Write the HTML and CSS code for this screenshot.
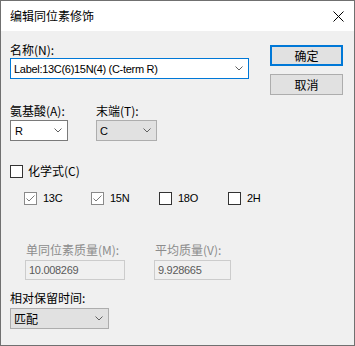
FILE: index.html
```html
<!DOCTYPE html>
<html lang="zh-CN">
<head>
    <meta charset="UTF-8">
    <meta name="viewport" content="width=device-width, initial-scale=1.0">
    <title>编辑同位素修饰</title>
    <link rel="stylesheet" href="styles.css">
</head>
<body>
<div class="dialog">
    <!-- Title Bar -->
    <div class="titlebar">
        <span class="title">编辑同位素修饰</span>
        <svg class="close" width="11" height="11" viewBox="0 0 11 11">
            <path d="M0.5 0.5 L10.5 10.5 M10.5 0.5 L0.5 10.5" stroke="#000" stroke-width="1" fill="none"/>
        </svg>
    </div>

    <div class="content">
        <!-- Name + Buttons -->
        <div class="top">
            <div class="name-field">
                <div class="lbl">名称(N):</div>
                <div class="combo combo-focus">
                    <span class="lat">Label:13C(6)15N(4) (C-term R)</span>
                    <svg class="arrow" width="8" height="5" viewBox="0 0 8 5"><path d="M0.5 0.5 L4 4 L7.5 0.5" stroke="#606060" fill="none"/></svg>
                </div>
            </div>
            <div class="buttons">
                <button class="btn btn-default">确定</button>
                <button class="btn">取消</button>
            </div>
        </div>

        <!-- Residue / Terminus -->
        <div class="residue">
            <div class="field field-aa">
                <div class="lbl">氨基酸(A):</div>
                <div class="combo combo-white">
                    <span class="lat">R</span>
                    <svg class="arrow" width="8" height="5" viewBox="0 0 8 5"><path d="M0.5 0.5 L4 4 L7.5 0.5" stroke="#606060" fill="none"/></svg>
                </div>
            </div>
            <div class="field field-term">
                <div class="lbl">末端(T):</div>
                <div class="combo combo-gray">
                    <span class="lat">C</span>
                    <svg class="arrow" width="8" height="5" viewBox="0 0 8 5"><path d="M0.5 0.5 L4 4 L7.5 0.5" stroke="#606060" fill="none"/></svg>
                </div>
            </div>
        </div>

        <!-- Formula checkbox -->
        <div class="check formula">
            <span class="box"></span>
            <span>化学式(C)</span>
        </div>

        <!-- Isotopes -->
        <div class="isotopes">
            <div class="check">
                <span class="box box-dim">
                    <svg width="11" height="11" viewBox="0 0 11 11"><path d="M1.5 5.5 L4 8 L9.5 2.5" stroke="#7a7a7a" fill="none"/></svg>
                </span>
                <span class="lat">13C</span>
            </div>
            <div class="check">
                <span class="box box-dim">
                    <svg width="11" height="11" viewBox="0 0 11 11"><path d="M1.5 5.5 L4 8 L9.5 2.5" stroke="#7a7a7a" fill="none"/></svg>
                </span>
                <span class="lat">15N</span>
            </div>
            <div class="check">
                <span class="box"></span>
                <span class="lat">18O</span>
            </div>
            <div class="check">
                <span class="box"></span>
                <span class="lat">2H</span>
            </div>
        </div>

        <!-- Masses -->
        <div class="masses">
            <div class="field field-mono">
                <div class="lbl lbl-disabled">单同位素质量(M):</div>
                <div class="textbox lat">10.008269</div>
            </div>
            <div class="field field-avg">
                <div class="lbl lbl-disabled">平均质量(V):</div>
                <div class="textbox lat">9.928665</div>
            </div>
        </div>

        <!-- Retention time -->
        <div class="lbl rt-label">相对保留时间:</div>
        <div class="combo combo-gray rt-combo">
            <span>匹配</span>
            <svg class="arrow" width="8" height="5" viewBox="0 0 8 5"><path d="M0.5 0.5 L4 4 L7.5 0.5" stroke="#606060" fill="none"/></svg>
        </div>
    </div>
</div>
</body>
</html>
```

FILE: styles.css
```css
body {
    margin: 0;
    font-family: "Noto Sans CJK SC", "Noto Sans", sans-serif;
    font-size: 12px;
    color: #000;
}

.lat {
    font-family: "Liberation Sans", Arial, sans-serif;
    font-size: 11px;
    letter-spacing: -0.3px;
}

.dialog {
    width: 355px;
    height: 346px;
    box-sizing: border-box;
    border: 1px solid #707070;
    background-color: #f0f0f0;
    display: flex;
    flex-direction: column;
}

.titlebar {
    height: 30px;
    background-color: #fff;
    display: flex;
    align-items: center;
    justify-content: space-between;
    padding: 0 10px 0 9px;
}

.title {
    line-height: 16px;
}

.close {
    display: block;
}

.content {
    padding: 11px 0 0 9px;
}

.lbl {
    line-height: 16px;
    height: 16px;
    white-space: nowrap;
}

.lbl-disabled {
    color: #8c8c8c;
}

/* top row */
.top {
    display: flex;
    align-items: flex-start;
    gap: 21px;
}

.name-field {
    width: 239px;
}

.buttons {
    margin-top: 3px;
    display: flex;
    flex-direction: column;
    gap: 8px;
}

.btn {
    width: 73px;
    height: 21px;
    box-sizing: border-box;
    border: 1px solid #adadad;
    background-color: #e1e1e1;
    font-family: inherit;
    font-size: 12px;
    padding: 0;
    line-height: 16px;
}

.btn-default {
    border: 2px solid #0078d7;
}

/* combo boxes */
.combo {
    height: 21px;
    box-sizing: border-box;
    display: flex;
    align-items: center;
    justify-content: space-between;
    padding: 0 5px 0 3px;
    line-height: 16px;
}

.combo-focus {
    border: 1px solid #0078d7;
    background-color: #fff;
}

.combo-white {
    border: 1px solid #7a7a7a;
    background-color: #fff;
    padding-left: 4px;
}

.combo-gray {
    border: 1px solid #adadad;
    background-color: #e1e1e1;
}

.arrow {
    display: block;
}

.residue {
    margin-top: 8px;
    display: flex;
    gap: 28px;
}

.residue .combo {
    margin-top: 1px;
}

.field-aa {
    width: 58px;
}

.field-term {
    width: 61px;
}

/* checkboxes */
.check {
    display: flex;
    align-items: center;
    gap: 5px;
    height: 16px;
    line-height: 16px;
}

.box {
    width: 13px;
    height: 13px;
    box-sizing: border-box;
    border: 1px solid #333;
    background-color: #fff;
    display: flex;
    align-items: center;
    justify-content: center;
}

.box-dim {
    border-color: #8a8a8a;
}

.box svg {
    display: block;
}

.formula {
    margin-top: 22px;
}

.isotopes {
    margin-top: 11px;
    padding-left: 14px;
    display: grid;
    grid-template-columns: 67px 68px 69px auto;
}

.isotopes .check {
    gap: 6px;
}

/* masses */
.masses {
    margin-top: 36px;
    padding-left: 15px;
    display: flex;
    gap: 29px;
}

.field-mono {
    width: 100px;
}

.field-avg {
    width: 77px;
}

.textbox {
    margin-top: 2px;
    height: 20px;
    box-sizing: border-box;
    border: 1px solid #cccccc;
    background-color: #f0f0f0;
    color: #5a5a5a;
    padding-left: 3px;
    line-height: 18px;
}

.field-mono .lbl,
.field-avg .lbl {
    padding-left: 1px;
}

.rt-label {
    margin-top: 10px;
}

.rt-combo {
    margin-top: 2px;
    width: 99px;
}
```
